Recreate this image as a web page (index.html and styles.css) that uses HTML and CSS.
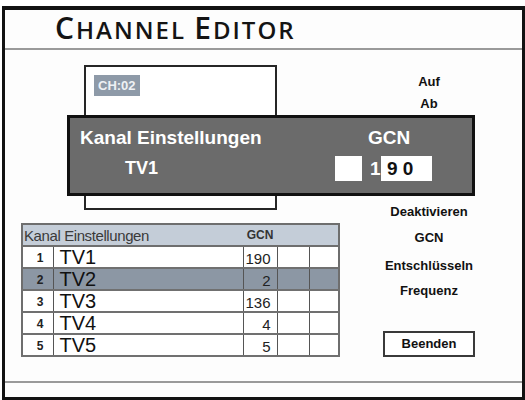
FILE: index.html
```html
<!DOCTYPE html>
<html>
<head>
<meta charset="utf-8">
<link rel="stylesheet" href="styles.css">
</head>
<body>
<div class="frame">
  <header class="title-bar">
    <h1 class="title"><span class="big">C</span>HANNEL <span class="big">E</span>DITOR</h1>
  </header>
  <main class="main">
    <section class="left">
      <div class="preview">
        <span class="ch-badge">CH:02</span>
      </div>
      <table class="channels">
        <colgroup>
          <col class="c-num"><col class="c-name"><col class="c-gcn"><col class="c-a"><col class="c-b">
        </colgroup>
        <thead>
          <tr><th class="h-name" colspan="2">Kanal Einstellungen</th><th class="h-gcn">GCN</th><th></th><th></th></tr>
        </thead>
        <tbody>
          <tr><td class="num">1</td><td class="name">TV1</td><td class="gcn">190</td><td></td><td></td></tr>
          <tr class="sel"><td class="num">2</td><td class="name">TV2</td><td class="gcn">2</td><td></td><td></td></tr>
          <tr><td class="num">3</td><td class="name">TV3</td><td class="gcn">136</td><td></td><td></td></tr>
          <tr><td class="num">4</td><td class="name">TV4</td><td class="gcn">4</td><td></td><td></td></tr>
          <tr><td class="num">5</td><td class="name">TV5</td><td class="gcn">5</td><td></td><td></td></tr>
        </tbody>
      </table>
    </section>
    <nav class="menu">
      <div class="item m-auf">Auf</div>
      <div class="item m-ab">Ab</div>
      <div class="item m-deak">Deaktivieren</div>
      <div class="item m-gcn">GCN</div>
      <div class="item m-ent">Entschlüsseln</div>
      <div class="item m-freq">Frequenz</div>
      <div class="btn">Beenden</div>
    </nav>
    <div class="panel">
      <div class="p-left">
        <div class="p-title">Kanal Einstellungen</div>
        <div class="p-ch">TV1</div>
      </div>
      <div class="p-right">
        <div class="p-title p-gcn">GCN</div>
        <div class="p-inputs">
          <span class="blank"></span>
          <span class="digit">1</span>
          <span class="field">9 0</span>
        </div>
      </div>
    </div>
  </main>
  <footer class="footer"></footer>
</div>
</body>
</html>
```
FILE: styles.css
```css
* { box-sizing: border-box; }
html, body { margin: 0; padding: 0; background: #fff; }
body { font-family: "Liberation Sans", Arial, sans-serif; color: #111; }

.frame {
  margin: 6px 0 0 2px;
  width: 523px;
  height: 394px;
  border: 3px solid #121212;
  border-top-width: 4px;
  display: flex;
  flex-direction: column;
  background: #fdfdfd;
}

.title-bar {
  height: 40px;
  border-bottom: 2px solid #9a9a9a;
  padding-left: 50px;
  display: flex;
  align-items: flex-end;
}
.title {
  margin: 0 0 3px 0;
  font-family: "Open Sans", sans-serif;
  font-weight: 600;
  font-size: 24px;
  line-height: 30px;
  letter-spacing: 2px;
  color: #141414;
}
.title .big { font-size: 30px; }

.main {
  position: relative;
  height: 331px;
  display: flex;
}
.left {
  width: 333px;
  padding-left: 16px;
}
.preview {
  margin: 15px 0 0 63px;
  width: 193px;
  height: 145px;
  border: 2px solid #262626;
  background: #fff;
  padding: 8px 0 0 8px;
}
.ch-badge {
  display: inline-block;
  background: #8e9aa8;
  color: #eef1f4;
  font-weight: bold;
  font-size: 13px;
  line-height: 21px;
  padding: 0 4px;
}

.channels {
  margin-top: 13px;
  width: 317px;
  table-layout: fixed;
  border-collapse: collapse;
  border: 2px solid #6e6e6e;
  background: #fff;
}
.c-num { width: 31px; }
.c-name { width: 190px; }
.c-gcn { width: 34px; }
.c-a { width: 32px; }
.c-b { width: 30px; }
.channels th {
  background: #c4cdd8;
  height: 22px;
  padding: 0;
  font-weight: normal;
  border-bottom: 2px solid #6e6e6e;
}
.channels .h-name {
  text-align: left;
  padding-left: 1px;
  font-family: "Liberation Sans Narrow", "Liberation Sans", sans-serif;
  font-size: 15px;
  color: #3a3a3a;
  letter-spacing: -0.4px;
}
.channels .h-gcn {
  font-weight: bold;
  font-size: 12px;
  color: #333;
}
.channels td {
  height: 20px;
  padding: 0;
  border-bottom: 2px solid #707070;
  border-left: 1px solid #555;
  vertical-align: bottom;
}
.channels td:first-child { border-left: none; }
.channels .num {
  text-align: right;
  padding-right: 9px;
  font-weight: bold;
  font-size: 12px;
  line-height: 18px;
  color: #222;
}
.channels .name {
  padding-left: 6px;
  font-size: 20px;
  line-height: 20px;
  color: #111;
}
.channels .gcn {
  text-align: right;
  padding-right: 6px;
  font-size: 15px;
  line-height: 17px;
  color: #222;
}
.channels tr.sel td { background: #8c97a4; }

.menu {
  flex: 1;
  display: flex;
  flex-direction: column;
  align-items: center;
  padding-right: 2px;
}
.item {
  font-weight: bold;
  font-size: 13px;
  line-height: 16px;
  color: #111;
}
.m-auf { margin-top: 24px; }
.m-ab { margin-top: 6px; }
.m-deak { margin-top: 92px; }
.m-gcn { margin-top: 10px; }
.m-ent { margin-top: 12px; }
.m-freq { margin-top: 9px; }
.btn {
  margin-top: 32px;
  width: 92px;
  height: 26px;
  border: 2px solid #3a3a3a;
  background: #fff;
  font-weight: bold;
  font-size: 13px;
  line-height: 22px;
  text-align: center;
}

.panel {
  position: absolute;
  left: 62px;
  top: 65px;
  width: 408px;
  height: 81px;
  border: 3px solid #111;
  background: #6b6b6b;
  color: #fff;
  display: flex;
  padding: 8px 0 0 10px;
}
.p-left { width: 255px; }
.p-title {
  font-weight: bold;
  font-size: 19px;
  line-height: 24px;
}
.p-ch {
  margin: 6px 0 0 45px;
  font-weight: bold;
  font-size: 18px;
  line-height: 24px;
}
.p-right {
  display: flex;
  flex-direction: column;
  align-items: flex-start;
}
.p-gcn { margin-left: 33px; }
.p-inputs {
  margin-top: 6px;
  display: flex;
  align-items: center;
}
.blank {
  width: 27px;
  height: 25px;
  background: #fff;
}
.digit {
  margin-left: 8px;
  width: 11px;
  font-weight: bold;
  font-size: 19px;
  line-height: 25px;
}
.field {
  width: 51px;
  height: 25px;
  background: #fff;
  color: #111;
  font-weight: bold;
  font-size: 19px;
  line-height: 25px;
  padding-left: 6px;
}

.footer {
  flex: 1;
  border-top: 2px solid #9a9a9a;
}
```
